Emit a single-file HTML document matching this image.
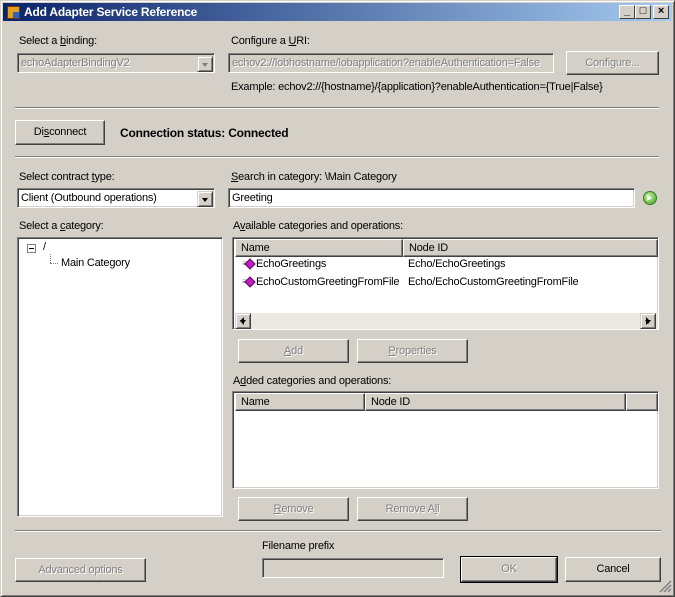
<!DOCTYPE html>
<html><head><style>
*{box-sizing:border-box;margin:0;padding:0}
body{width:675px;height:597px;background:#d4d0c8;font-family:"Liberation Sans",sans-serif;font-size:11px;color:#000;position:relative;overflow:hidden;letter-spacing:-0.2px}
.a{position:absolute;white-space:nowrap}
.win{position:absolute;left:0;top:0;width:675px;height:597px;border:1px solid;border-color:#d4d0c8 #404040 #404040 #d4d0c8;box-shadow:inset 1px 1px #fff,inset -1px -1px #808080}
.title{position:absolute;left:3px;top:3px;width:669px;height:18px;background:linear-gradient(90deg,#0a246a,#a6caf0);color:#fff;font-weight:bold;font-size:12px;line-height:18px;padding-left:21px}
.tb{position:absolute;top:5px;width:16px;height:14px;background:#d4d0c8;border:1px solid;border-color:#fff #404040 #404040 #fff;font-size:11px;line-height:11px;text-align:center;font-weight:bold;color:#000}
.btn{position:absolute;background:#d4d0c8;border:1px solid;border-color:#fff #404040 #404040 #fff;box-shadow:inset -1px -1px #808080;text-align:center}
.dis{color:#808080;text-shadow:1px 1px #fff}
.sunk{position:absolute;border:1px solid;border-color:#808080 #fff #fff #808080;box-shadow:inset 1px 1px #404040,inset -1px -1px #d4d0c8;background:#fff}
.sunk.g{background:#d4d0c8}
.sep{position:absolute;height:2px;border-top:1px solid #808080;border-bottom:1px solid #fff}
.hdr{position:absolute;height:18px;background:#d4d0c8;border:1px solid;border-color:#fff #404040 #404040 #fff;box-shadow:inset -1px -1px #808080;line-height:16px;padding-left:5px}
.arr{position:absolute;width:16px;height:16px;background:#d4d0c8;border:1px solid;border-color:#d4d0c8 #404040 #404040 #d4d0c8;box-shadow:inset 1px 1px #fff,inset -1px -1px #808080}
.arr:after{content:"";position:absolute;left:4px;top:6px;border:3.5px solid transparent;border-top:4px solid #000}
.arr.d:after{border-top-color:#808080}
u{text-decoration:underline}
</style></head><body>
<div class="win"></div>
<div class="title">Add Adapter Service Reference</div>
<div class="a" style="left:7px;top:6px;width:13px;height:13px;background:#e0a020;border:1px solid #803000"><div style="position:absolute;left:5px;top:5px;width:6px;height:6px;background:#3060c0"></div></div>
<div class="tb" style="left:619px">_</div>
<div class="tb" style="left:635px">□</div>
<div class="tb" style="left:653px">×</div>

<div class="a" style="left:19px;top:35px">Select a <u>b</u>inding:</div>
<div class="sunk g" style="left:17px;top:53px;width:198px;height:20px"><span class="a dis" style="left:3px;top:3px">echoAdapterBindingV2</span><div class="arr d" style="left:179px;top:2px"></div></div>
<div class="a" style="left:231px;top:35px">Configure a <u>U</u>RI:</div>
<div class="sunk g" style="left:228px;top:53px;width:326px;height:20px"><span class="a dis" style="left:3px;top:3px">echov2://lobhostname/lobapplication?enableAuthentication=False</span></div>
<div class="btn dis" style="left:566px;top:51px;width:93px;height:24px;line-height:22px">Configure...</div>
<div class="a" style="left:231px;top:81px">Example: echov2://{hostname}/{application}?enableAuthentication={True|False}</div>
<div class="sep" style="left:15px;top:107px;width:644px"></div>

<div class="btn" style="left:15px;top:120px;width:90px;height:25px;line-height:23px">Di<u>s</u>connect</div>
<div class="a" style="left:120px;top:126px;font-weight:bold;font-size:12px">Connection status: Connected</div>
<div class="sep" style="left:15px;top:156px;width:644px"></div>

<div class="a" style="left:19px;top:171px">Select contract <u>t</u>ype:</div>
<div class="sunk" style="left:17px;top:188px;width:198px;height:20px"><span class="a" style="left:3px;top:3px">Client (Outbound operations)</span><div class="arr" style="left:179px;top:2px"></div></div>
<div class="a" style="left:231px;top:171px"><u>S</u>earch in category: \Main Category</div>
<div class="sunk" style="left:228px;top:188px;width:407px;height:20px"><span class="a" style="left:3px;top:3px">Greeting</span></div>
<div class="a" style="left:643px;top:191px;width:14px;height:14px;border-radius:50%;background:radial-gradient(circle at 40% 35%,#c8f0a0,#40a020);border:1px solid #308020"><div style="position:absolute;left:3px;top:3px;border:3.5px solid transparent;border-left:5px solid #fff"></div></div>

<div class="a" style="left:19px;top:220px">Select a <u>c</u>ategory:</div>
<div class="sunk" style="left:17px;top:237px;width:206px;height:280px">
<div class="a" style="left:9px;top:6px;width:9px;height:9px;border:1px solid #808080;background:#fff"><div style="position:absolute;left:1px;top:3px;width:5px;height:1px;background:#000"></div></div>
<span class="a" style="left:25px;top:3px">/</span>
<div class="a" style="left:32px;top:16px;width:1px;height:9px;border-left:1px dotted #808080"></div>
<div class="a" style="left:32px;top:25px;width:8px;border-top:1px dotted #808080"></div>
<span class="a" style="left:43px;top:19px">Main Category</span>
</div>

<div class="a" style="left:233px;top:220px">A<u>v</u>ailable categories and operations:</div>
<div class="sunk" style="left:232px;top:237px;width:427px;height:93px">
<div class="hdr" style="left:2px;top:1px;width:168px">Name</div>
<div class="hdr" style="left:170px;top:1px;width:255px">Node ID</div>
<span class="a" style="left:9px;top:21px;color:#808080;font-size:8px">≡</span><div class="a" style="left:13px;top:22px;width:8px;height:8px;background:#c020c0;border:1px solid #600060;transform:rotate(45deg)"></div>
<span class="a" style="left:23px;top:20px">EchoGreetings</span><span class="a" style="left:175px;top:20px">Echo/EchoGreetings</span>
<span class="a" style="left:9px;top:39px;color:#808080;font-size:8px">≡</span><div class="a" style="left:13px;top:40px;width:8px;height:8px;background:#c020c0;border:1px solid #600060;transform:rotate(45deg)"></div>
<span class="a" style="left:23px;top:38px">EchoCustomGreetingFromFile</span><span class="a" style="left:175px;top:38px">Echo/EchoCustomGreetingFromFile</span>
<div class="a" style="left:2px;top:75px;width:423px;height:16px;background:#ece9e2"></div>
<div class="arr" style="left:2px;top:75px;width:16px"></div>
<div class="arr" style="left:407px;top:75px;width:16px"></div>
<div class="a" style="left:3px;top:79px;border:4px solid transparent;border-right:4px solid #000"></div>
<div class="a" style="left:413px;top:79px;border:4px solid transparent;border-left:4px solid #000"></div>
</div>

<div class="btn dis" style="left:238px;top:339px;width:111px;height:24px;line-height:22px"><u>A</u>dd</div>
<div class="btn dis" style="left:357px;top:339px;width:111px;height:24px;line-height:22px"><u>P</u>roperties</div>

<div class="a" style="left:233px;top:375px">A<u>d</u>ded categories and operations:</div>
<div class="sunk" style="left:232px;top:391px;width:427px;height:98px">
<div class="hdr" style="left:2px;top:1px;width:130px">Name</div>
<div class="hdr" style="left:132px;top:1px;width:261px">Node ID</div>
<div class="hdr" style="left:393px;top:1px;width:32px"></div>
</div>

<div class="btn dis" style="left:238px;top:497px;width:111px;height:24px;line-height:22px"><u>R</u>emove</div>
<div class="btn dis" style="left:357px;top:497px;width:111px;height:24px;line-height:22px">Remove A<u>l</u>l</div>
<div class="sep" style="left:15px;top:530px;width:646px"></div>

<div class="a" style="left:262px;top:540px">Filename prefix</div>
<div class="sunk g" style="left:262px;top:558px;width:182px;height:20px"></div>
<div class="btn dis" style="left:15px;top:558px;width:131px;height:24px;line-height:22px">Advanced options</div>
<div class="btn dis" style="left:461px;top:557px;width:96px;height:25px;line-height:23px;outline:1px solid #000">OK</div>
<div class="btn" style="left:565px;top:557px;width:96px;height:25px;line-height:23px">Cancel</div>
<svg class="a" style="left:659px;top:580px" width="13" height="13"><path d="M12 1L1 12M12 5L5 12M12 9L9 12" stroke="#808080" stroke-width="1.5"/></svg>
</body></html>
